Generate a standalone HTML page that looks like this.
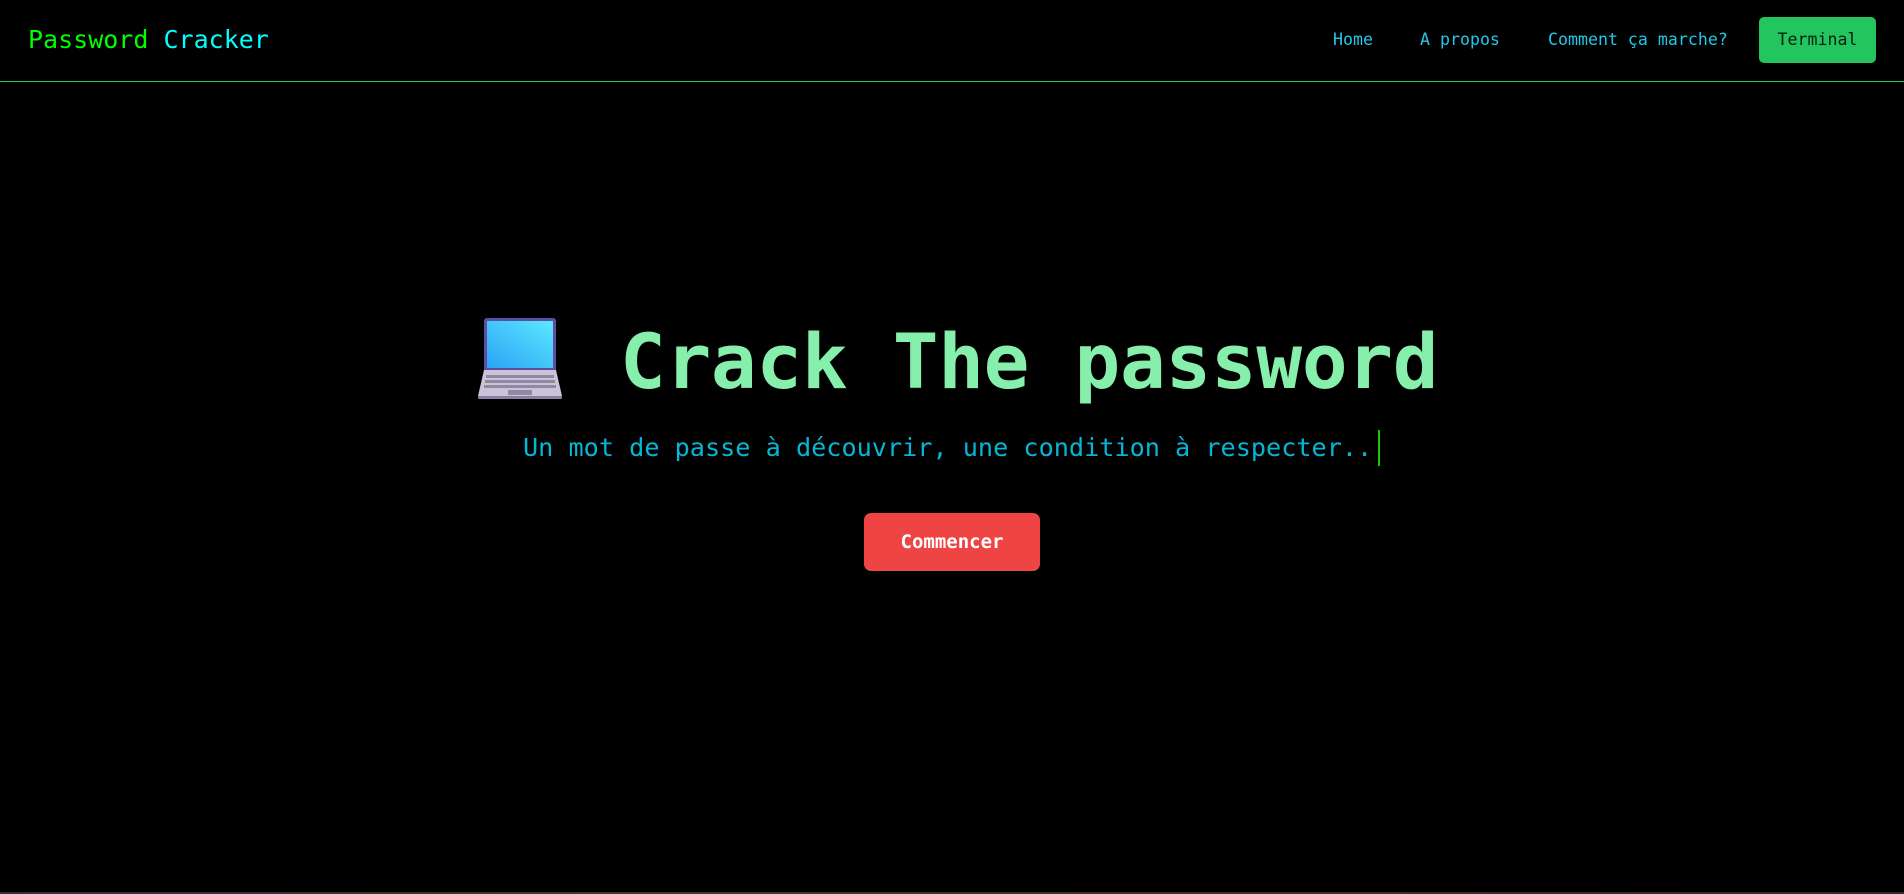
<!DOCTYPE html>
<html><head><meta charset="utf-8"><style>
html,body{margin:0;padding:0;background:#000;width:1904px;height:894px;overflow:hidden;font-family:"DejaVu Sans Mono","Liberation Mono",monospace;}
.nav{position:absolute;left:0;top:0;width:1904px;height:81px;border-bottom:1px solid #22c55e;}
.logo{position:absolute;left:28px;top:24px;font-size:25px;line-height:32px;white-space:nowrap;}
.l{position:absolute;top:29px;font-size:16.6px;line-height:22px;color:#22c7e8;white-space:nowrap;}
.term{position:absolute;left:1759px;top:17px;width:117px;height:46px;background:#22c55e;border-radius:5px;color:#04210f;font-size:16.6px;line-height:46px;text-align:center;}
.title{position:absolute;left:620px;top:314px;font-size:76px;line-height:96px;font-weight:bold;color:#86efac;white-space:nowrap;letter-spacing:-0.3px;}
.sub{position:absolute;left:523px;top:433px;font-size:25.2px;line-height:30px;color:#06b6d4;white-space:nowrap;}
.cur{position:absolute;left:1378px;top:430px;width:2px;height:36px;background:#16c60c;}
.btn{position:absolute;left:864px;top:513px;width:176px;height:58px;background:#ef4444;border-radius:7px;color:#fff;font-weight:bold;font-size:19px;line-height:58px;text-align:center;}
.bot{position:absolute;left:0;top:892px;width:1904px;height:2px;background:linear-gradient(90deg,#2a3438,#3a3a30,#3a3030,#302a2a);}
</style></head><body>
<div class="nav">
<div class="logo"><span style="color:#00ff00">Password</span> <span style="color:#00ffff">Cracker</span></div>
<div class="l" style="left:1333px">Home</div>
<div class="l" style="left:1420px">A propos</div>
<div class="l" style="left:1548px">Comment ça marche?</div>
<div class="term">Terminal</div>
</div>
<svg style="position:absolute;left:476px;top:316px" width="88" height="86" viewBox="0 0 88 86">
<defs><linearGradient id="g" x1="0" y1="1" x2="1" y2="0"><stop offset="0" stop-color="#2aa3f5"/><stop offset="1" stop-color="#5ce8ff"/></linearGradient></defs>
<rect x="8" y="2" width="72" height="54" rx="3" fill="#5e4ea0"/>
<rect x="11" y="5" width="66" height="47" fill="url(#g)"/>
<path d="M8 54 H80 L86 80 H2 Z" fill="#cbc4d8"/>
<rect x="2" y="80" width="84" height="3" rx="1" fill="#8a7fa6"/>
<g fill="#8f8aa3"><rect x="10" y="59" width="68" height="3"/><rect x="9" y="64" width="70" height="3"/><rect x="8" y="69" width="72" height="3"/></g>
<rect x="32" y="74" width="24" height="5" fill="#8f8aa3"/>
</svg>
<div class="title">Crack The password</div>
<div class="sub">Un mot de passe à découvrir, une condition à respecter..</div>
<div class="cur"></div>
<div class="btn">Commencer</div>
<div class="bot"></div>
</body></html>
